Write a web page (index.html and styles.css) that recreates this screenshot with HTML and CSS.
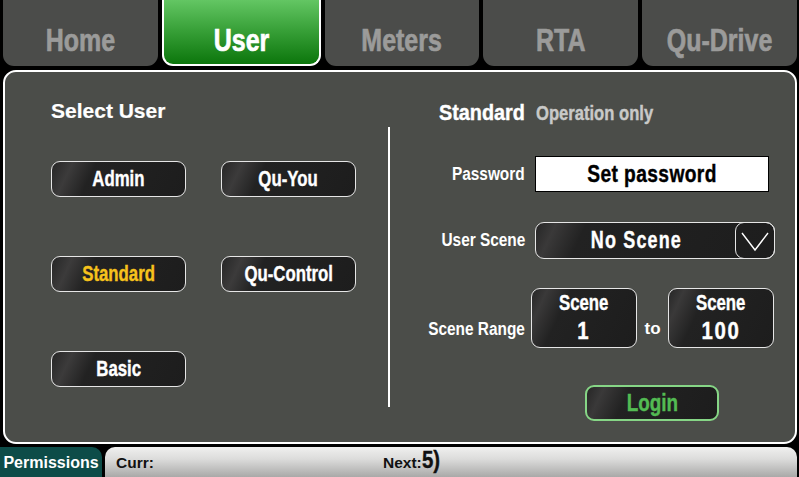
FILE: index.html
```html
<!DOCTYPE html>
<html lang="en">
<head>
  <meta charset="UTF-8" />
  <meta name="viewport" content="width=device-width, initial-scale=1.0"/>
  <title>Qu - User</title>
  <link rel="stylesheet" href="styles.css">
</head>
<body>
  <div class="tabs">
    <div class="tab"><span class="nar">Home</span></div>
    <div class="tab active"><span class="nar">User</span></div>
    <div class="tab"><span class="nar">Meters</span></div>
    <div class="tab"><span class="nar">RTA</span></div>
    <div class="tab"><span class="nar">Qu-Drive</span></div>
  </div>

  <div class="panel">
    <div class="select-user">
      <h2 class="title">Select User</h2>
      <div class="user-grid">
        <div class="btn"><span class="nar">Admin</span></div>
        <div class="btn"><span class="nar">Qu-You</span></div>
        <div class="btn selected"><span class="nar">Standard</span></div>
        <div class="btn"><span class="nar">Qu-Control</span></div>
        <div class="btn"><span class="nar">Basic</span></div>
      </div>
    </div>

    <div class="divider"></div>

    <div class="user-settings">
      <div class="heading">
        <span class="nar user-name">Standard</span>
        <span class="nar user-desc">Operation only</span>
      </div>

      <div class="row password-row">
        <span class="label"><span class="nar">Password</span></span>
        <div class="password-box"><span class="nar">Set password</span></div>
      </div>

      <div class="row scene-row">
        <span class="label"><span class="nar">User Scene</span></span>
        <div class="dropdown">
          <span class="dropdown-text"><span class="nar">No Scene</span></span>
          <div class="dropdown-arrow">
            <svg width="30" height="22" viewBox="0 0 30 22">
              <path d="M2 3 L15 20 L28 3" fill="none" stroke="#fff" stroke-width="1.4" />
            </svg>
          </div>
        </div>
      </div>

      <div class="row range-row">
        <span class="label"><span class="nar">Scene Range</span></span>
        <div class="scene-box">
          <span class="nar scene-cap">Scene</span>
          <span class="nar scene-num">1</span>
        </div>
        <span class="to">to</span>
        <div class="scene-box">
          <span class="nar scene-cap">Scene</span>
          <span class="nar scene-num">100</span>
        </div>
      </div>

      <div class="login"><span class="nar">Login</span></div>
    </div>
  </div>

  <div class="status">
    <div class="permissions">Permissions</div>
    <div class="scene-bar">
      <span class="curr">Curr:</span>
      <span class="next">Next:<b class="nar">5)</b></span>
    </div>
  </div>
</body>
</html>
```

FILE: styles.css
```css
* {
  margin: 0;
  padding: 0;
  box-sizing: border-box;
}

body {
  width: 799px;
  height: 477px;
  background: #000;
  overflow: hidden;
  font-family: "Liberation Sans", Arial, sans-serif;
  font-weight: bold;
  color: #fff;
  display: flex;
  flex-direction: column;
}

/* the console font is a heavy narrow grotesque, so squeeze and thicken the glyphs */
.nar {
  display: inline-block;
  white-space: nowrap;
  transform: scaleX(0.78);
  -webkit-text-stroke: 0.4px currentColor;
}

/* top tab strip */
.tabs {
  display: flex;
  gap: 4px;
  height: 66px;
  padding: 0 2px 0 3px;
}

.tab {
  flex: 1;
  background: #4b4c4a;
  border-radius: 0 0 11px 11px;
  color: #9b9b9a;
  font-size: 32px;
  line-height: 32px;
  display: flex;
  justify-content: center;
  align-items: flex-end;
  padding-bottom: 10px;
}

.tab .nar {
  -webkit-text-stroke: 0.7px currentColor;
}

.tab.active {
  background: linear-gradient(#63c663, #3aa23a 45%, #0c760c);
  border: 2px solid #fff;
  border-top: none;
  color: #fff;
  padding-bottom: 8px;
}

/* main panel */
.panel {
  height: 374px;
  margin: 4px 2px 0 3px;
  background: #4b4d49;
  border: 2px solid #fff;
  border-radius: 13px;
  display: flex;
}

.select-user {
  width: 383px;
  padding: 27px 0 0 46px;
}

.title {
  font-size: 21px;
  line-height: 24px;
  font-weight: bold;
  -webkit-text-stroke: 0.2px #fff;
}

.user-grid {
  display: grid;
  grid-template-columns: 135px 135px;
  column-gap: 35px;
  row-gap: 59px;
  margin-top: 38px;
}

.btn {
  height: 36px;
  border: 1px solid #e6e6e6;
  border-radius: 9px;
  background: linear-gradient(115deg, #262626 0%, #3c3b3b 14%, #222 30%, #1d1d1d 100%);
  font-size: 21.5px;
  display: flex;
  align-items: center;
  justify-content: center;
}

.btn.selected {
  color: #f6c21c;
}

.divider {
  width: 2px;
  background: #fff;
  margin: 55px 0 35px;
}

/* settings for the chosen user */
.user-settings {
  flex: 1;
  padding-top: 29px;
}

.heading {
  padding-left: 49px;
  line-height: 24px;
  display: flex;
  align-items: baseline;
  gap: 2px;
}

.heading .nar {
  transform-origin: left center;
}

.user-name {
  font-size: 22px;
  transform: scaleX(0.9);
}

.user-desc {
  color: #c9c9c8;
  font-size: 20px;
  transform: scaleX(0.83);
}

.row {
  display: flex;
  align-items: center;
}

.label {
  width: 135px;
  text-align: right;
  font-size: 17.5px;
  margin-right: 10px;
}

.label .nar {
  transform: scaleX(0.88);
  transform-origin: right center;
  -webkit-text-stroke: 0;
}

.password-row {
  margin-top: 31px;
  height: 36px;
}

.password-box {
  width: 234px;
  height: 36px;
  background: #fff;
  border: 1px solid #000;
  color: #000;
  font-size: 24px;
  letter-spacing: 0.5px;
  display: flex;
  align-items: center;
  justify-content: center;
}

.password-box .nar {
  transform: scaleX(0.8);
}

.scene-row {
  margin-top: 30px;
  height: 37px;
}

.dropdown {
  width: 240px;
  height: 37px;
  border: 1px solid #e6e6e6;
  border-radius: 9px;
  background: linear-gradient(115deg, #262626 0%, #3a3939 8%, #222 20%, #1d1d1d 100%);
  display: flex;
  align-items: center;
}

.dropdown-text {
  flex: 1;
  text-align: center;
  font-size: 23px;
  letter-spacing: 1.5px;
  padding-left: 2px;
}

.dropdown-arrow {
  width: 40px;
  height: 37px;
  margin: -1px -1px -1px 0;
  border: 1px solid #e6e6e6;
  border-radius: 9px;
  display: flex;
  align-items: center;
  justify-content: center;
}

.range-row {
  margin-top: 29px;
  height: 60px;
}

/* label and "to" sit on the number line, below the box centre */
.range-row .label {
  margin-right: 6px;
  margin-top: 22px;
}

.scene-box {
  width: 106px;
  height: 60px;
  border: 1px solid #e6e6e6;
  border-radius: 9px;
  background: linear-gradient(115deg, #262626 0%, #3a3939 12%, #222 30%, #1d1d1d 100%);
  display: flex;
  flex-direction: column;
  align-items: center;
  padding-top: 2px;
}

.scene-cap {
  font-size: 21.5px;
  line-height: 24px;
}

.scene-num {
  font-size: 24px;
  line-height: 32px;
  letter-spacing: 2px;
  transform: scaleX(0.85);
}

.to {
  width: 31px;
  margin-top: 22px;
  text-align: center;
  font-size: 17px;
}

.login {
  width: 134px;
  height: 36px;
  margin: 37px 0 0 195px;
  border: 2px solid #86d686;
  border-radius: 9px;
  background: linear-gradient(115deg, #262626 0%, #3a3939 12%, #222 30%, #1d1d1d 100%);
  color: #53bb53;
  font-size: 23px;
  display: flex;
  align-items: center;
  justify-content: center;
}

.login .nar {
  transform: scaleX(0.82);
}

/* bottom status strip */
.status {
  display: flex;
  margin-top: 3px;
  height: 30px;
  gap: 3px;
}

.permissions {
  width: 102px;
  background: #0d4c48;
  border-radius: 0 10px 0 0;
  font-size: 16px;
  display: flex;
  align-items: center;
  justify-content: center;
  padding-top: 2px;
}

.scene-bar {
  flex: 1;
  margin-right: 2px;
  background: linear-gradient(#f0f0ef, #dcdcdb 40%, #a9a9a8);
  border-radius: 10px 10px 0 0;
  color: #111;
  display: flex;
  align-items: flex-end;
  padding: 0 0 5px 11px;
  font-size: 15.5px;
}

.curr {
  width: 267px;
}

.next b {
  font-size: 24px;
  line-height: 20px;
  transform-origin: left center;
  transform: scaleX(0.85);
}
```
